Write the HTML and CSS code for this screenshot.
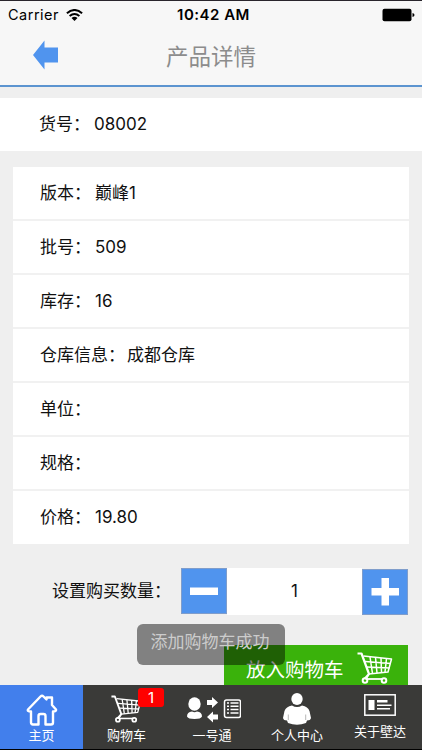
FILE: index.html
```html
<!DOCTYPE html>
<html lang="zh">
<head>
  <meta charset="utf-8">
  <title>产品详情</title>
  <link rel="stylesheet" href="styles.css">
</head>
<body>

  <svg width="0" height="0" class="defs">
    <symbol id="cart" viewBox="0 0 36 32">
      <g fill="none" stroke="currentColor" stroke-width="1.5" stroke-linejoin="round">
        <path d="M6.500 4 34.500 7 31 20 12 22 9.500 26.500"/>
        <path d="M8 9.500 33.500 11.500M9.500 15 32.500 16M13 5 15.500 21.500M18.500 5.500 20 21M24 6 24.500 20.500M29.500 6.500 28 20"/>
        <path d="M9 27H26" stroke-width="1.800"/>
        <path d="M.5 1.500H4.500L12 22 7.500 27" stroke-width="2.200"/>
        <circle cx="8" cy="28.500" r="2.300" stroke-width="2"/>
        <circle cx="27" cy="28.500" r="2.300" stroke-width="2"/>
      </g>
    </symbol>
  </svg>

  <div class="page">

    <div class="status">
      <div class="carrier">
        <span>Carrier</span>
        <svg width="17" height="12" viewBox="0 0 17 12">
          <g fill="none" stroke="#000" stroke-width="2">
            <path d="M.9 4.300Q8.500 -2.300 16.100 4.300"/>
            <path d="M3.600 7Q8.500 2.900 13.400 7"/>
          </g>
          <path d="M5.500 8.900Q8.500 6.500 11.500 8.900L8.500 12Z"/>
        </svg>
      </div>
      <div class="time">10:42 AM</div>
      <svg class="battery" width="33" height="14" viewBox="0 0 33 14">
        <rect x=".5" y=".8" width="29" height="12.400" rx="2"/>
        <path d="M30.500 5Q32.500 5.300 32.500 7T30.500 9Z"/>
      </svg>
    </div>

    <header class="nav">
      <svg class="back" width="25" height="30" viewBox="0 0 25 30">
        <path d="M0 15 11.500 .5V7.500H25V22.500H11.500V29.500Z" fill="#5094ee"/>
      </svg>
      <h1>产品详情</h1>
    </header>

    <main>
      <div class="sku"><span class="label">货号：</span><span>08002</span></div>

      <div class="card">
        <div class="row"><span class="label">版本：</span><span>巅峰1</span></div>
        <div class="row"><span class="label">批号：</span><span>509</span></div>
        <div class="row"><span class="label">库存：</span><span>16</span></div>
        <div class="row"><span class="label">仓库信息：</span><span>成都仓库</span></div>
        <div class="row"><span class="label">单位：</span></div>
        <div class="row"><span class="label">规格：</span></div>
        <div class="row"><span class="label">价格：</span><span>19.80</span></div>
      </div>

      <div class="amount">
        <span class="amount-label">设置购买数量：</span>
        <div class="btn minus">
          <svg width="46" height="46"><path d="M9 19.500H37V27H9Z" fill="#fff"/></svg>
        </div>
        <div class="count">1</div>
        <div class="btn plus">
          <svg width="46" height="46"><path d="M9.500 19H19.500V9H27V19H37V26.500H27V36.500H19.500V26.500H9.500Z" fill="#fff"/></svg>
        </div>
      </div>

      <div class="add">
        <span>放入购物车</span>
        <svg width="36" height="32"><use href="#cart"/></svg>
      </div>
    </main>

    <footer class="tabs">
      <div class="tab active">
        <svg width="32" height="33" viewBox="0 0 32 33">
          <path d="M2 16.500 14.500 3.500Q16 2 17.500 3.500L20.500 6.500V4.500H26V12L30 16.500Q30.500 18.500 27 18.500V29.500Q27 31.500 25 31.500H19.500V23Q19.500 21 17.500 21H14.500Q12.500 21 12.500 23V31.500H7Q5 31.500 5 29.500V18.500Q1 18.500 2 16.500Z" fill="none" stroke="#fff" stroke-width="2.400" stroke-linejoin="round"/>
        </svg>
        <span>主页</span>
      </div>
      <div class="tab cart">
        <svg width="31" height="28"><use href="#cart"/></svg>
        <span>购物车</span>
        <b class="badge">1</b>
      </div>
      <div class="tab number">
        <svg width="54" height="26" viewBox="0 0 54 26" fill="#fff">
          <ellipse cx="7.500" cy="7" rx="6.200" ry="6.800"/>
          <path d="M0 19.500Q0 15 5 14.500Q7.500 16 10 14.500Q15 15 15 19.500Q14 22 7.500 22T0 19.500Z"/>
          <path d="M20 3H25V0L31 5.500 25 11V8H20Z"/>
          <path d="M31 17.500H26V14.500L20 20 26 25.500V22.500H31Z"/>
          <rect x="37.500" y="3" width="16" height="17.500" rx="2" fill="none" stroke="#fff" stroke-width="1.500"/>
          <path d="M40 6H42M43.500 6H51.500M40 9.300H42M43.500 9.300H51.500M40 12.600H42M43.500 12.600H51.500M40 16H42M43.500 16H51.500" stroke="#fff" stroke-width="1.500"/>
        </svg>
        <span>一号通</span>
      </div>
      <div class="tab user">
        <svg width="28" height="32" viewBox="0 0 28 32" fill="#fff">
          <ellipse cx="14" cy="6" rx="5.700" ry="6"/>
          <path d="M9 12.500Q14 15.500 19 12.500Q25 13.500 26.500 18L28 25Q27.500 27.500 24 27.500L23 30Q14 33.500 5 30L4 27.500Q.5 27.500 0 25L1.500 18Q3 13.500 9 12.500Z"/>
          <path d="M5.300 21.500V27M22.700 21.500V27" stroke="#999" stroke-width=".7"/>
        </svg>
        <span>个人中心</span>
      </div>
      <div class="tab about">
        <svg width="32" height="22" viewBox="0 0 32 22">
          <rect x=".8" y=".8" width="30.400" height="20.400" fill="none" stroke="#fff" stroke-width="1.500"/>
          <path d="M4.500 6H10.500V16H4.500ZM13 6H23.500V8.500H13ZM13 10.500H27.500V12H13ZM13 14H26V15.500H13Z" fill="#fff"/>
        </svg>
        <span>关于壁达</span>
      </div>
    </footer>

    <div class="toast">添加购物车成功</div>
  </div>

</body>
</html>
```

FILE: styles.css
```css
* {
  box-sizing: border-box;
}

body {
  margin: 0;
  font-family: Inter, 'Noto Sans CJK SC', sans-serif;
  font-size: 17px;
  color: #111;
}

svg {
  display: block;
  flex: none;
}

.defs {
  position: absolute;
}

.page {
  position: relative;
  display: flex;
  flex-direction: column;
  width: 422px;
  height: 750px;
  overflow: hidden;
  background: #efefef;
}

.status {
  display: grid;
  grid-template-columns: 1fr auto 1fr;
  align-items: center;
  flex: none;
  height: 27px;
  padding: 1px 7px 0 8px;
  border-top: 1px solid #29252c;
  background: #f7f7f7;
  color: #000;
}

.carrier {
  display: flex;
  align-items: center;
  gap: 7px;
  font-size: 14.500px;
  letter-spacing: .5px;
}

.time {
  margin-left: 4px;
  font-size: 15px;
  font-weight: 600;
  letter-spacing: .5px;
}

.battery {
  justify-self: end;
}

.nav {
  display: grid;
  grid-template-columns: 33px 1fr 33px;
  align-items: center;
  flex: none;
  height: 60px;
  padding-bottom: 3px;
  border-bottom: 2px solid #5c94d0;
  background: #f7f7f7;
}

.back {
  margin-left: 33px;
}

h1 {
  margin: 0;
  padding-top: 4px;
  font-size: 22.500px;
  font-weight: 400;
  line-height: 30px;
  text-align: center;
  color: #8c8c8c;
}

main {
  flex: 1;
  min-height: 0;
  overflow: hidden;
}

.sku {
  display: flex;
  align-items: baseline;
  height: 53px;
  margin-top: 11px;
  padding: 12px 0 0 39px;
  background: #fff;
}

.label {
  min-width: 53px;
  margin-right: 2px;
}

.card {
  margin: 16px 13px 0;
  background: #fff;
}

.row {
  display: flex;
  align-items: baseline;
  height: 54px;
  padding: 12px 0 0 27px;
  border-bottom: 2px solid #f1f1f1;
}

.row:last-child {
  height: 53px;
  border-bottom: 0;
}

.amount {
  display: flex;
  align-items: center;
  height: 48px;
  margin-top: 23px;
  padding-left: 52px;
}

.amount-label {
  width: 129px;
  padding-bottom: 4px;
  white-space: nowrap;
}

.btn {
  width: 46px;
  height: 46px;
  background: #5094ee;
  box-shadow: inset 0 0 0 1px #7f9dcb;
}

.plus {
  margin-top: 2px;
}

.count {
  width: 135px;
  height: 47px;
  line-height: 46px;
  text-align: center;
  background: #fff;
}

.add {
  display: flex;
  align-items: center;
  width: 184px;
  height: 46px;
  margin: 30px 0 0 224px;
  padding-left: 22px;
  gap: 13px;
  background: #3ab20b;
  color: #fff;
  font-size: 19.500px;
}

.tabs {
  display: grid;
  grid-template-columns: 83px 87px 84px 86px 80px;
  flex: none;
  height: 65px;
  border-bottom: 1px solid #000;
  background: #3a3a38;
}

.tab {
  position: relative;
  display: flex;
  flex-direction: column;
  align-items: center;
  justify-content: flex-end;
  padding-bottom: 5px;
  color: #fff;
  font-size: 13px;
  line-height: 18px;
}

.tab.active {
  background: #427fec;
}

.cart svg {
  margin-bottom: 3px;
}

.number svg {
  margin: 0 0 3px 4px;
}

.user svg {
  margin-bottom: 1px;
}

.tab.about {
  padding-bottom: 9px;
}

.about svg {
  margin-bottom: 6px;
}

.badge {
  position: absolute;
  top: 3px;
  right: 6px;
  width: 26px;
  height: 19px;
  border-radius: 3px;
  background: #f00;
  font-size: 15px;
  font-weight: 400;
  line-height: 19px;
  text-align: center;
}

.toast {
  position: absolute;
  left: 137px;
  top: 624px;
  width: 148px;
  height: 41px;
  padding-right: 2px;
  border-radius: 6px;
  background: rgba(0, 0, 0, .46);
  color: #ccc;
  line-height: 36px;
  text-align: center;
}
```
